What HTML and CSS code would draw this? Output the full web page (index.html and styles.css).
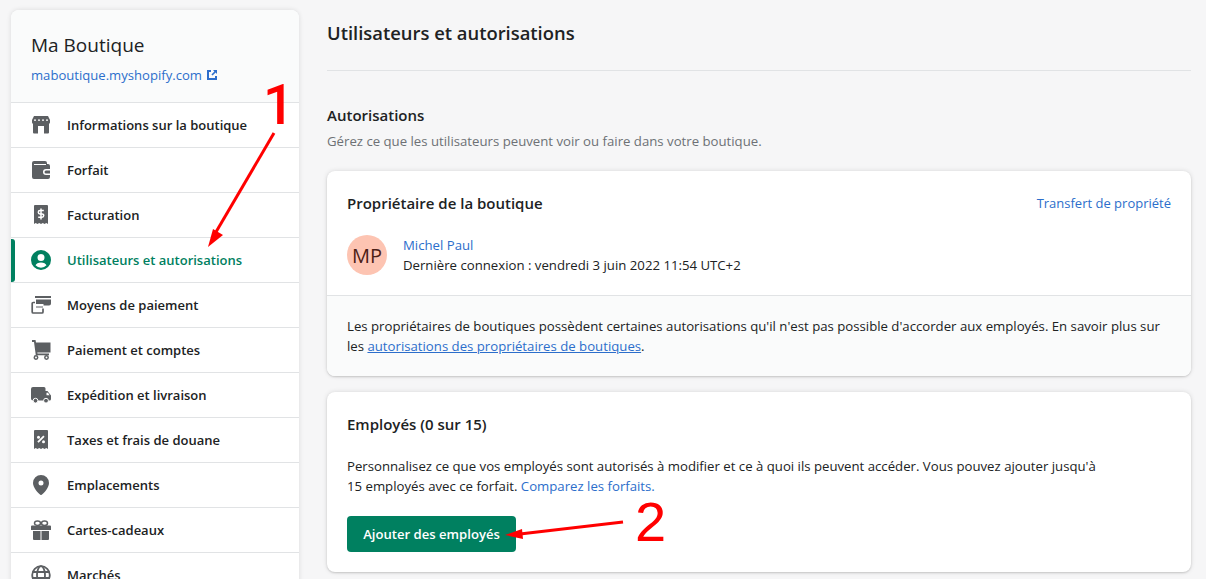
FILE: index.html
```html
<!DOCTYPE html>
<html lang="fr">
<head>
  <meta charset="UTF-8">
  <title>Utilisateurs et autorisations</title>
  <link rel="stylesheet" href="styles.css">
</head>
<body>
  <div class="page">
    <aside class="sidebar">
      <div class="shop">
        <div class="shop-name">Ma Boutique</div>
        <a class="shop-link">maboutique.myshopify.com
          <svg class="ext" viewBox="0 0 12 12"><path d="M1 1h4v2H3v6h6V7h2v4H1z M7 1h4v4l-1.400-1.400-3 3-1.200-1.200 3-3z" fill="#2c6ecb"/></svg>
        </a>
      </div>
      <ul class="nav">
        <li class="nav-item">
          <svg class="nav-icon" viewBox="0 0 20 20"><path d="M3 1h14l2 4v2.500a2.500 2.500 0 0 1-1 1.500v8.500a1 1 0 0 1-1 1h-4V11H7v7.500H3a1 1 0 0 1-1-1V9a2.500 2.500 0 0 1-1-1.500V5z" fill="#5c5f62"/><path d="M3 5.200h14" stroke="#fff" stroke-width="1.200" stroke-dasharray="2 2"/></svg>
          Informations sur la boutique
        </li>
        <li class="nav-item">
          <svg class="nav-icon" viewBox="0 0 20 20"><path d="M3 1h11a2 2 0 0 1 2 2v1h1a2 2 0 0 1 2 2v3h-4a3 3 0 0 0 0 6h4v2a2 2 0 0 1-2 2H3a2 2 0 0 1-2-2V3a2 2 0 0 1 2-2z M15 10.500h4v3h-4a1.500 1.500 0 0 1 0-3z" fill="#5c5f62"/><path d="M3 4.500h12" stroke="#fff" stroke-width="1"/></svg>
          Forfait
        </li>
        <li class="nav-item">
          <svg class="nav-icon" viewBox="0 0 20 20"><path d="M4 0h12a1 1 0 0 1 1 1v18l-1.700-1-1.800 1-1.700-1-1.800 1-1.800-1-1.700 1-1.800-1L3 19V1a1 1 0 0 1 1-1z" fill="#5c5f62"/><path d="M12.800 5.500H9a1.700 1.700 0 0 0 0 3.400h2a1.700 1.700 0 0 1 0 3.400H7.200 M10 3.500v11" fill="none" stroke="#fff" stroke-width="1.500"/></svg>
          Facturation
        </li>
        <li class="nav-item active">
          <svg class="nav-icon" viewBox="0 0 20 20"><path fill-rule="evenodd" d="M10 0a10 10 0 1 1 0 20 10 10 0 0 1 0-20z M10 4a3.500 3.500 0 1 0 0 7 3.500 3.500 0 0 0 0-7z M10 12.500c-2.800 0-4.800 1.200-5.500 2.800A7.500 7.500 0 0 0 10 17.800a7.500 7.500 0 0 0 5.500-2.500c-.7-1.600-2.700-2.800-5.500-2.800z" fill="#008060"/></svg>
          Utilisateurs et autorisations
        </li>
        <li class="nav-item">
          <svg class="nav-icon" viewBox="0 0 20 20"><path d="M4 1h16v2H4z M5 4.500h15v4a2 2 0 0 1-2 2h-5.500V9H5z" fill="#5c5f62"/><path d="M4 7.500H2.200a1 1 0 0 0-1 1V17a1 1 0 0 0 1 1H11a1 1 0 0 0 1-1v-3.500" fill="none" stroke="#5c5f62" stroke-width="1.700"/><path d="M5 12h7" stroke="#5c5f62" stroke-width="1"/></svg>
          Moyens de paiement
        </li>
        <li class="nav-item">
          <svg class="nav-icon" viewBox="0 0 20 20"><path d="M1 0h3.500l.5 2.500h14.500v10H6.300l.2 1H18v1.800H4.800L3 2H1z" fill="#5c5f62"/><g fill="#fff" stroke="#5c5f62" stroke-width="1.500"><circle cx="5" cy="17.500" r="1.700"/><circle cx="15.500" cy="17.500" r="1.700"/></g></svg>
          Paiement et comptes
        </li>
        <li class="nav-item">
          <svg class="nav-icon" viewBox="0 0 20 20"><path d="M2 2h11a1.500 1.500 0 0 1 1.500 1.500V6h2l3.500 4.500v3.500a1.500 1.500 0 0 1-1.500 1.500H2a2 2 0 0 1-2-2V4a2 2 0 0 1 2-2z" fill="#5c5f62"/><path d="M15.500 7.800h1.500l1.600 2.400h-3.100z" fill="#fff"/><g fill="#5c5f62" stroke="#fff" stroke-width="1"><circle cx="4.500" cy="15.700" r="2.400"/><circle cx="15" cy="15.700" r="2.400"/></g></svg>
          Expédition et livraison
        </li>
        <li class="nav-item">
          <svg class="nav-icon" viewBox="0 0 20 20"><path d="M4 0h12a1 1 0 0 1 1 1v18l-1.700-1-1.800 1-1.700-1-1.800 1-1.800-1-1.700 1-1.800-1L3 19V1a1 1 0 0 1 1-1z" fill="#5c5f62"/><path d="M12.300 5.500l1.300 1.300-6 6-1.300-1.300z" fill="#fff"/><circle cx="7.500" cy="7.200" r="1.500" fill="#fff"/><circle cx="12.500" cy="11.800" r="1.500" fill="#fff"/></svg>
          Taxes et frais de douane
        </li>
        <li class="nav-item">
          <svg class="nav-icon" viewBox="0 0 20 20"><path fill-rule="evenodd" d="M10 0a8 8 0 0 1 8 8c0 4.500-5 10-7 11.600a1.500 1.500 0 0 1-2 0C7 18 2 12.500 2 8a8 8 0 0 1 8-8z M10 5.500a2.500 2.500 0 1 0 0 5 2.500 2.500 0 0 0 0-5z" fill="#5c5f62"/></svg>
          Emplacements
        </li>
        <li class="nav-item">
          <svg class="nav-icon" viewBox="0 0 20 20"><path d="M1 5.500h18a1 1 0 0 1 1 1v3.500H0V6.500a1 1 0 0 1 1-1z M2 11h7.500v9H3a1 1 0 0 1-1-1z M10.500 11H18v8a1 1 0 0 1-1 1h-6.500z" fill="#5c5f62"/><g fill="none" stroke="#5c5f62" stroke-width="1.500"><ellipse cx="6.500" cy="3.200" rx="3" ry="2.200"/><ellipse cx="13.500" cy="3.200" rx="3" ry="2.200"/></g></svg>
          Cartes-cadeaux
        </li>
        <li class="nav-item">
          <svg class="nav-icon" viewBox="0 0 20 20"><g fill="none" stroke="#5c5f62" stroke-width="1.800"><circle cx="10" cy="10" r="8.800"/><ellipse cx="10" cy="10" rx="4" ry="8.800"/><path d="M1.500 7h17M1.500 13h17"/></g></svg>
          Marchés
        </li>
      </ul>
    </aside>

    <main class="content">
      <h1 class="page-title">Utilisateurs et autorisations</h1>
      <section class="section">
        <h2 class="section-title">Autorisations</h2>
        <p class="section-sub">Gérez ce que les utilisateurs peuvent voir ou faire dans votre boutique.</p>

        <div class="card">
          <div class="card-body owner">
            <div class="card-head">
              <h3 class="card-title">Propriétaire de la boutique</h3>
              <a class="link transfer">Transfert de propriété</a>
            </div>
            <div class="user">
              <div class="avatar">MP</div>
              <div class="user-info">
                <a class="link">Michel Paul</a>
                <div>Dernière connexion : vendredi 3 juin 2022 11:54 UTC+2</div>
              </div>
            </div>
          </div>
          <div class="card-foot">
            Les propriétaires de boutiques possèdent certaines autorisations qu'il n'est pas possible d'accorder aux employés. En savoir plus sur les <a class="link underline">autorisations des propriétaires de boutiques</a>.
          </div>
        </div>

        <div class="card">
          <div class="card-body staff">
            <h3 class="card-title">Employés (0 sur 15)</h3>
            <p class="staff-text">Personnalisez ce que vos employés sont autorisés à modifier et ce à quoi ils peuvent accéder. Vous pouvez ajouter jusqu'à 15 employés avec ce forfait. <a class="link">Comparez les forfaits.</a></p>
            <button class="btn">Ajouter des employés</button>
          </div>
        </div>
      </section>
    </main>
  </div>

  <!-- annotations drawn on top of the screenshot -->
  <div class="mark mark-one">1</div>
  <div class="mark mark-two">2</div>
  <svg class="arrows" viewBox="0 0 1206 579">
    <path d="M274 133L216 232" stroke="#f00" stroke-width="3" fill="none"/>
    <path d="M208 247L213 229 223 235z" fill="#f00"/>
    <path d="M623 522L520 534" stroke="#f00" stroke-width="3" fill="none"/>
    <path d="M505 535L522 529 523 539z" fill="#f00"/>
  </svg>
</body>
</html>
```

FILE: styles.css
```css
* {
  margin: 0;
  padding: 0;
  box-sizing: border-box;
}
html, body {
  height: 579px;
  overflow: hidden;
}
body {
  font-family: "Open Sans", "Noto Sans", sans-serif;
  font-size: 13.2px;
  background-color: #f6f6f7;
  color: #202223;
  position: relative;
}
.page {
  display: flex;
  align-items: flex-start;
  padding: 10px 15px 0 11px;
  gap: 28px;
}
.sidebar {
  width: 288px;
  flex-shrink: 0;
  background-color: #fff;
  border-radius: 8px;
  box-shadow: 0 0 5px rgba(23, 24, 24, 0.12);
  overflow: hidden;
}
.shop {
  height: 92px;
  padding: 22px 20px 0;
  background-color: #fafbfb;
}
.shop-name {
  font-size: 19px;
  line-height: 26px;
}
.shop-link {
  display: flex;
  align-items: center;
  gap: 4px;
  margin-top: 7px;
  color: #2c6ecb;
  font-size: 13.1px;
  line-height: 20px;
}
.ext {
  width: 12px;
  height: 12px;
}
.nav {
  list-style: none;
}
.nav-item {
  display: flex;
  align-items: center;
  gap: 16px;
  height: 45px;
  padding: 0 20px;
  border-top: 1px solid #e1e3e5;
  font-size: 13px;
  font-weight: 600;
  position: relative;
}
.nav-icon {
  width: 20px;
  height: 20px;
  flex-shrink: 0;
}
.active {
  color: #008060;
}
.active::before {
  content: "";
  position: absolute;
  left: 0;
  top: 1px;
  bottom: 0;
  width: 4px;
  background-color: #008060;
  border-radius: 0 3px 3px 0;
}
.content {
  flex: 1;
}
.page-title {
  font-size: 18.4px;
  font-weight: 600;
  line-height: 26px;
  margin-top: 10px;
  padding-bottom: 24px;
  border-bottom: 1px solid #e1e3e5;
}
.section {
  padding-top: 34px;
}
.section-title {
  font-size: 15px;
  font-weight: 600;
  line-height: 20px;
}
.section-sub {
  color: #6d7175;
  line-height: 20px;
  margin-top: 6px;
}
.card {
  background-color: #fff;
  border-radius: 8px;
  box-shadow: 0 0 5px rgba(23, 24, 24, 0.12), 0 1px 2px rgba(0, 0, 0, 0.15);
  margin-top: 16px;
  overflow: hidden;
}
.section-sub + .card {
  margin-top: 20px;
}
.card-body {
  padding: 20px;
}
.card-head {
  display: flex;
  justify-content: space-between;
  align-items: center;
}
.card-title {
  font-size: 15px;
  font-weight: 600;
  line-height: 24px;
}
.link {
  color: #2c6ecb;
}
.transfer {
  font-size: 13px;
}
.underline {
  text-decoration: underline;
}
.owner {
  height: 124px;
}
.user {
  display: flex;
  align-items: center;
  gap: 16px;
  margin-top: 20px;
}
.avatar {
  width: 40px;
  height: 40px;
  border-radius: 50%;
  background-color: #fdc4b2;
  color: #4a2016;
  font-size: 20px;
  display: flex;
  align-items: center;
  justify-content: center;
}
.user-info {
  line-height: 20px;
}
.card-foot {
  height: 81px;
  padding: 20px;
  background-color: #fafbfb;
  border-top: 1px solid #e1e3e5;
  line-height: 20px;
}
.staff {
  height: 180px;
}
.staff-text {
  line-height: 20px;
  margin-top: 20px;
  max-width: 760px;
}
.btn {
  display: block;
  margin-top: 20px;
  width: 169px;
  height: 36px;
  background-color: #008060;
  color: #fff;
  border: none;
  border-radius: 4px;
  font-family: inherit;
  font-size: 13.1px;
  font-weight: 600;
}
.mark {
  position: absolute;
  color: #f00;
  line-height: 56px;
}
.mark-one {
  left: 263px;
  top: 77px;
  font-family: Roboto, sans-serif;
  font-size: 55px;
  font-weight: 500;
}
.mark-two {
  left: 635px;
  top: 494px;
  font-family: "Liberation Sans", Arial, sans-serif;
  font-size: 56px;
}
.arrows {
  position: absolute;
  left: 0;
  top: 0;
  width: 1206px;
  height: 579px;
  pointer-events: none;
}
```
